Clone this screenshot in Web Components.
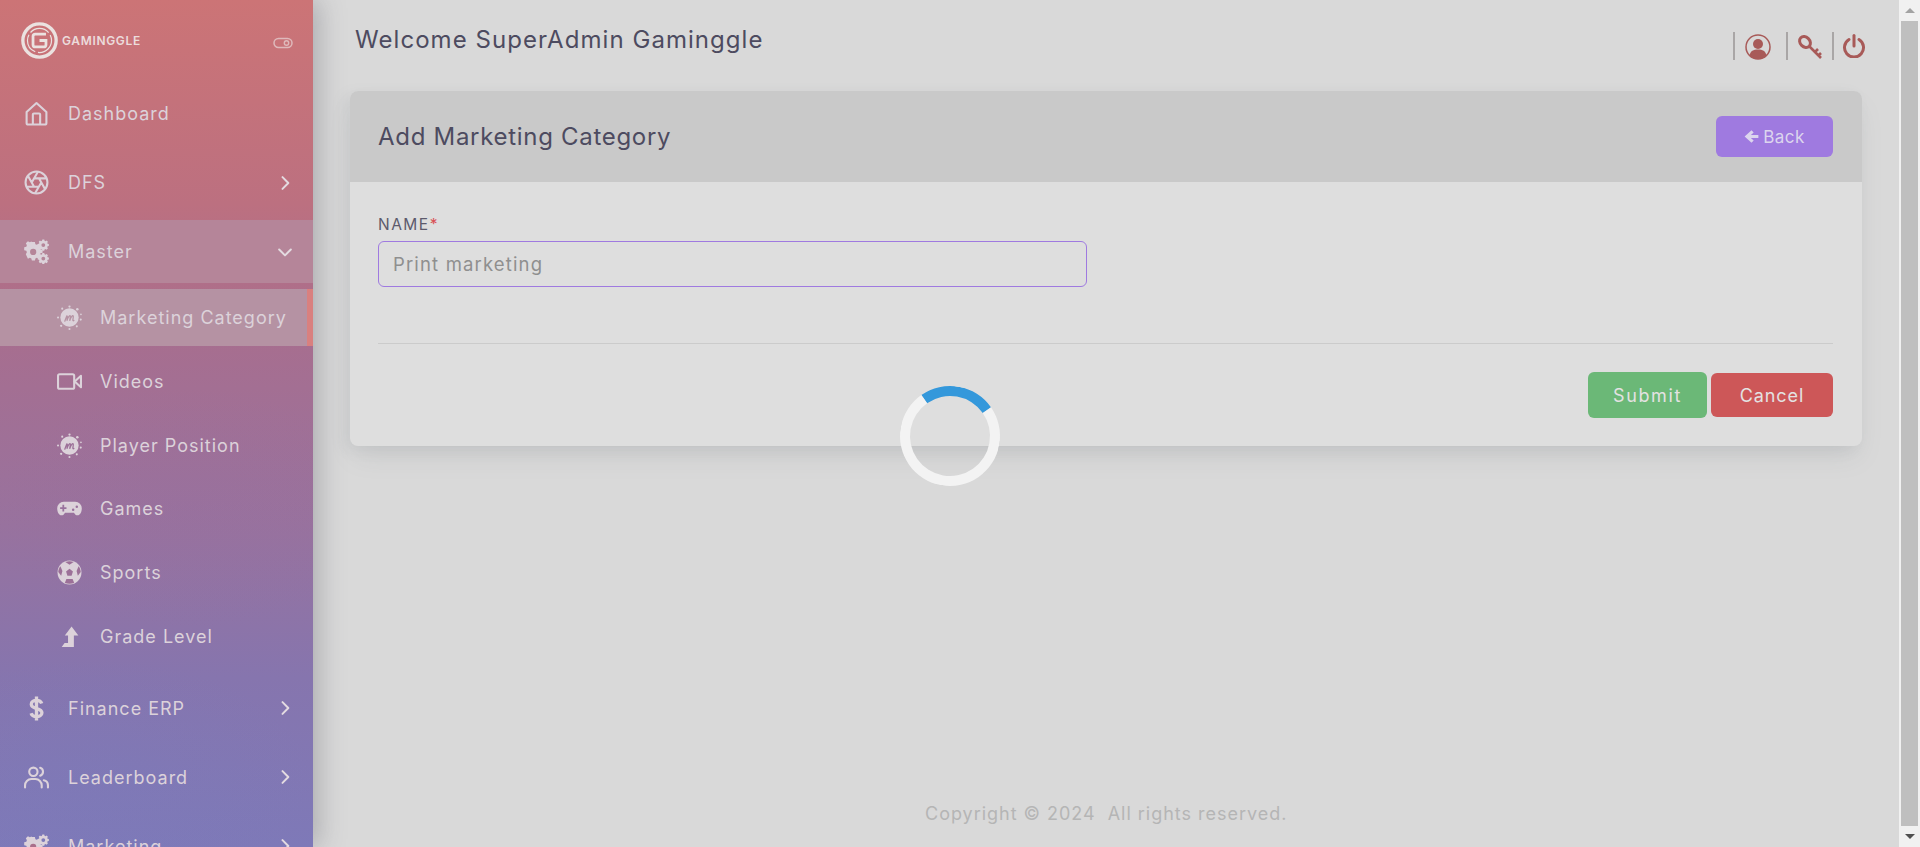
<!DOCTYPE html>
<html>
<head>
<meta charset="utf-8">
<title>Add Marketing Category</title>
<style>
    html, body { margin: 0; height: 100%; overflow: hidden; background: #d9d9d9; }
    body { font-family: "Inter", "Liberation Sans", sans-serif; }
</style>
</head>
<body>
<app-shell>
    <side-bar slot="side">
        <nav-item label="Dashboard" icon="home"></nav-item>
        <nav-item label="DFS" icon="aperture" arrow="right"></nav-item>
        <nav-item label="Master" icon="cogs" arrow="down" open></nav-item>
        <div slot="sub">
            <nav-item sub active label="Marketing Category" icon="badge"></nav-item>
            <nav-item sub label="Videos" icon="video"></nav-item>
            <nav-item sub label="Player Position" icon="badge"></nav-item>
            <nav-item sub label="Games" icon="gamepad"></nav-item>
            <nav-item sub label="Sports" icon="ball"></nav-item>
            <nav-item sub label="Grade Level" icon="levelup"></nav-item>
        </div>
        <nav-item slot="after" label="Finance ERP" icon="dollar" arrow="right"></nav-item>
        <nav-item slot="after" label="Leaderboard" icon="users" arrow="right"></nav-item>
        <nav-item slot="after" label="Marketing" icon="cogs" arrow="right"></nav-item>
    </side-bar>
    <top-bar slot="main"></top-bar>
    <form-card slot="main"></form-card>
    <page-footer slot="footer"></page-footer>
    <load-spinner slot="over"></load-spinner>
    <fake-scrollbar slot="scroll"></fake-scrollbar>
</app-shell>

<script>
const ICONS = {
    home: `<path d="M2.500 10.500 12 2l9.500 8.500V21a1.500 1.500 0 0 1-1.500 1.500H4A1.500 1.500 0 0 1 2.500 21z" fill="none" stroke="currentColor" stroke-width="2" stroke-linejoin="round"/><path d="M8.500 22.500V13a1 1 0 0 1 1-1h5a1 1 0 0 1 1 1v9.500" fill="none" stroke="currentColor" stroke-width="2"/>`,
    aperture: `<g fill="none" stroke="currentColor" stroke-width="2" stroke-linecap="round"><circle cx="12" cy="12" r="10.500"/><path d="M14.300 8 20 17.900M9.700 8h11.400M7.400 12l5.700-9.900M9.700 16 4 6.100M14.300 16H2.900M16.600 12l-5.700 9.900"/></g>`,
    cogs: `<g fill="currentColor"><path d="M8.200 5.400h3.200l.5 2.200 1.500.7 2-1.100 2.200 2.200-1.100 2 .7 1.600 2.200.5v3.100l-2.200.5-.7 1.600 1.100 2-2.200 2.200-2-1.100-1.500.6-.5 2.200H8.200l-.5-2.200-1.600-.6-2 1.100L1.900 18l1.100-2-.6-1.600-2.200-.5v-3.100l2.200-.5.6-1.600-1.100-2L4.100 4.500l2 1.100 1.600-.7z" transform="translate(0 -2) scale(.92)"/><path fill-rule="evenodd" d="M18.600 0h2l.3 1.300 1 .4 1.100-.7 1.400 1.400-.7 1.100.4 1 1.300.3v2l-1.300.3-.4 1 .7 1.100L23 10.600l-1.100-.7-1 .4-.3 1.300h-2l-.3-1.300-1-.4-1.100.7-1.400-1.400.7-1.100-.4-1-1.300-.3v-2l1.300-.3.4-1-.7-1.100L16.100 1l1.100.7 1-.4zM19.600 3.800a2 2 0 1 0 0 4 2 2 0 0 0 0-4z" transform="translate(.5 .5) scale(.92)"/><path fill-rule="evenodd" d="M18.600 13h2l.3 1.300 1 .4 1.100-.7 1.400 1.400-.7 1.100.4 1 1.300.3v2l-1.300.3-.4 1 .7 1.100-1.400 1.400-1.100-.7-1 .4-.3 1.300h-2l-.3-1.300-1-.4-1.100.7-1.400-1.400.7-1.100-.4-1-1.300-.3v-2l1.300-.3.4-1-.7-1.100 1.400-1.400 1.100.7 1-.4zM19.600 16.800a2 2 0 1 0 0 4 2 2 0 0 0 0-4z" transform="translate(.5 1.500) scale(.92)"/><circle cx="8.800" cy="12.400" r="3" fill="var(--cut, #b48)"/></g>`,
    badge: `<g fill="currentColor"><circle cx="12" cy="12" r="8.800"/><circle cx="12" cy="1.500" r="1.100"/><circle cx="5" cy="3.500" r="1"/><circle cx="19.500" cy="4" r="1.200"/><circle cx="23" cy="9" r=".8"/><circle cx="1" cy="12" r="1"/><circle cx="22.800" cy="14" r="1"/><circle cx="4" cy="20" r="1.100"/><circle cx="12" cy="23" r="1"/><circle cx="19" cy="20.500" r="1"/></g><path d="M7.500 15.500c.8-2 1.400-4 2-5 .6 0 .5 1.500 0 4.600 1-2.600 2-4.800 3-4.800.7 0 0 2.400-.3 4.800 1-2.600 2-4.800 3-4.800.9 0 .1 3 0 4.200 0 .7.4.9 1 .4" fill="none" stroke="var(--cut, #a57)" stroke-width="1.200" stroke-linecap="round"/>`,
    video: `<rect x="1" y="5" width="15.500" height="14" rx="1.500" fill="none" stroke="currentColor" stroke-width="2"/><path d="M23 6.500 17 12l6 5.500z" fill="none" stroke="currentColor" stroke-width="2" stroke-linejoin="round"/>`,
    gamepad: `<path fill="currentColor" fill-rule="evenodd" d="M6.500 5.500h11a6.300 6.300 0 0 1 6.300 6.500c0 3.500-1.700 6.500-4 6.500-1.700 0-2.600-1-3.500-2.500H7.700c-.9 1.500-1.800 2.500-3.500 2.500-2.300 0-4-3-4-6.500a6.300 6.300 0 0 1 6.300-6.500zM5.200 8.500v2.300H3v1.700h2.200v2.300h1.700v-2.300h2.200v-1.700H6.900V8.500zM15.500 12a1.200 1.200 0 1 0 0 2.400 1.200 1.200 0 0 0 0-2.400zm3.500-3a1.200 1.200 0 1 0 0 2.400 1.200 1.200 0 0 0 0-2.400z"/>`,
    ball: `<circle cx="12" cy="12" r="11.500" fill="currentColor"/><g fill="var(--cut, #957)"><path d="M12 8.500 15.300 11 14 15h-4l-1.300-4z"/><path d="M8 1.800 12 4.500l4-2.700C13.500 1 10.500 1 8 1.800z"/><path d="M1.200 11.500 4 15l1.200-4.500L3.300 6C2 7.500 1.300 9.500 1.200 11.500z"/><path d="M22.800 11.500 20 15l-1.200-4.500L20.700 6c1.300 1.500 2 3.500 2.100 5.500z"/><path d="M7.500 22l1.500-3.700h6l1.500 3.700c-3 1-6 1-9 0z"/></g>`,
    levelup: `<path fill="currentColor" d="M14 2.500 20.500 11h-4.300v11H4.500l2.800-3.800h3.300V11H7.500z"/>`,
    dollar: `<path d="M17 7.200C16.300 5 14.300 4.200 12 4.200c-2.700 0-5 1.300-5 3.800 0 5.300 10.200 2.800 10.200 8.100 0 2.500-2.500 3.700-5.200 3.700-2.400 0-4.500-1-5.200-3.200M12 .5v23" fill="none" stroke="currentColor" stroke-width="3.200"/>`,
    users: `<g fill="none" stroke="currentColor" stroke-width="2" stroke-linecap="round"><path d="M1 21.500v-2a6 6 0 0 1 6-6h4a6 6 0 0 1 6 6v2"/><circle cx="9" cy="6.500" r="4"/><path d="M23 21.500v-2a5 5 0 0 0-4-4.800M15.500 2.700a4 4 0 0 1 0 7.600"/></g>`,
    right: `<path d="m9 5 7 7-7 7" fill="none" stroke="currentColor" stroke-width="2.400" stroke-linecap="round" stroke-linejoin="round"/>`,
    down: `<path d="m5 9 7 7 7-7" fill="none" stroke="currentColor" stroke-width="2.400" stroke-linecap="round" stroke-linejoin="round"/>`
};

class AppShell extends HTMLElement {
    constructor() {
        super();
        this.attachShadow({mode: 'open'}).innerHTML = `
            <style>
                :host { display: flex; height: 847px; position: relative; overflow: hidden; }
                .page { flex: 1; display: flex; min-width: 0; }
                .content { flex: 1; min-width: 0; display: flex; flex-direction: column; padding: 0 37px; }
                .grow { flex: 1; }
            </style>
            <div class="page">
                <slot name="side"></slot>
                <div class="content">
                    <slot name="main"></slot>
                    <div class="grow"></div>
                    <slot name="footer"></slot>
                </div>
            </div>
            <slot name="scroll"></slot>
            <slot name="over"></slot>
        `;
    }
}

class SideBar extends HTMLElement {
    constructor() {
        super();
        this.attachShadow({mode: 'open'}).innerHTML = `
            <style>
                :host {
                    display: block; flex: 0 0 313px; width: 313px; height: 847px; overflow: hidden;
                    position: relative; z-index: 1;
                    background:
                        radial-gradient(200px 120px at 60% 60%, rgba(150,110,160,.22), transparent),
                        radial-gradient(220px 120px at 30% 92%, rgba(120,125,190,.25), transparent),
                        linear-gradient(180deg, #cc7476 0%, #bc7080 24%, #a76e8f 40%, #98729e 62%, #8675ae 80%, #7e79b8 100%);
                    box-shadow: 6px 0 24px rgba(90,90,100,.35);
                    color: #dcd2da;
                }
                .brand { height: 82px; box-sizing: border-box; display: flex; align-items: flex-start; padding: 22px 0 0 21px; }
                .brand svg.logo { width: 37px; height: 37px; flex: none; }
                .name { font: 600 12px "Inter", sans-serif; letter-spacing: .66px; margin: 12px 0 0 4px; color: #ecdcdc; line-height: 14px; }
                .toggle { margin: 14px 20px 0 auto; width: 20px; height: 14px; }
                .rows { display: flex; flex-direction: column; gap: 6px; }
                .after { display: flex; flex-direction: column; gap: 6px; margin-top: 12px; }
                ::slotted(div) { display: flex; flex-direction: column; gap: 6.750px; margin-top: 6px; }
            </style>
            <div class="brand">
                <svg class="logo" viewBox="0 0 40 40">
                    <circle cx="20" cy="20" r="18" fill="none" stroke="#ebe2e0" stroke-width="3.600"/>
                    <circle cx="20" cy="20" r="13" fill="none" stroke="#ebe2e0" stroke-width="1.300" stroke-dasharray="22 3"/>
                    <path d="M27 13H15.500a2.500 2.500 0 0 0-2.500 2.500v9a2.500 2.500 0 0 0 2.500 2.500h9a2.500 2.500 0 0 0 2.500-2.500V20h-7" fill="none" stroke="#ebe2e0" stroke-width="3"/>
                </svg>
                <span class="name">GAMINGGLE</span>
                <svg class="toggle" viewBox="0 0 20 14">
                    <rect x="1" y="2.500" width="18" height="9" rx="4.500" fill="none" stroke="#dfb9bb" stroke-width="1.500"/>
                    <circle cx="13.500" cy="7" r="2.200" fill="none" stroke="#dfb9bb" stroke-width="1.400"/>
                </svg>
            </div>
            <div class="rows"><slot></slot></div>
            <slot name="sub"></slot>
            <div class="after"><slot name="after"></slot></div>
        `;
    }
}

class NavItem extends HTMLElement {
    connectedCallback() {
        if (this.shadowRoot) return;
        const label = this.getAttribute('label');
        const icon = ICONS[this.getAttribute('icon')] || '';
        const arrow = this.getAttribute('arrow');
        this.attachShadow({mode: 'open'}).innerHTML = `
            <style>
                :host {
                    display: flex; align-items: center; height: 63px; box-sizing: border-box;
                    padding-left: 24px; font-size: 18px; letter-spacing: 1px; color: #dcd2da;
                    --cut: #a96f8b;
                }
                :host([open]) { background: #b58599; --cut: #b58599; }
                :host([sub]) { height: 57px; padding-left: 57px; --cut: #9c7098; }
                :host([active]) {
                    background: #b592a3; box-shadow: inset -6px 0 0 #d9807f; --cut: #b592a3;
                }
                svg.i { width: 25px; height: 25px; flex: none; color: #dcd2da; }
                .t { margin-left: 19px; flex: 1; white-space: nowrap; }
                :host([sub]) .t { margin-left: 18px; }
                svg.a { width: 20px; height: 20px; flex: none; margin-right: 18px; color: #e4dbe1; }
            </style>
            <svg class="i" viewBox="0 0 24 24">${icon}</svg>
            <span class="t">${label}</span>
            ${arrow ? `<svg class="a" viewBox="0 0 24 24">${ICONS[arrow]}</svg>` : ''}
        `;
    }
}

class TopBar extends HTMLElement {
    constructor() {
        super();
        this.attachShadow({mode: 'open'}).innerHTML = `
            <style>
                :host { display: flex; height: 91px; box-sizing: border-box; }
                h1 { margin: 24px 0 0 5px; font-size: 24px; line-height: 32px; font-weight: 400; color: #4d4b60; letter-spacing: 1.05px; white-space: nowrap; }
                .tools { margin-left: auto; display: flex; align-items: flex-start; padding-top: 32px; margin-right: -4px; color: #a85a58; }
                .sep { width: 2px; height: 28px; background: #a9a6a6; }
                svg { display: block; }
                .u { width: 26px; height: 26px; margin: 2px 15px 0 10px; }
                .k { width: 26px; height: 26px; margin: 2px 9px 0 9px; }
                .p { width: 24px; height: 24px; margin: 2px 0 0 8px; }
            </style>
            <h1>Welcome SuperAdmin Gaminggle</h1>
            <div class="tools">
                <div class="sep"></div>
                <svg class="u" viewBox="0 0 26 26">
                    <circle cx="13" cy="13" r="12" fill="none" stroke="currentColor" stroke-width="1.500"/>
                    <circle cx="13" cy="10" r="5" fill="currentColor"/>
                    <path d="M4.500 21.500c.8-4.500 4-6 8.500-6s7.700 1.500 8.500 6A12 12 0 0 1 13 25a12 12 0 0 1-8.500-3.500z" fill="currentColor"/>
                </svg>
                <div class="sep"></div>
                <svg class="k" viewBox="0 0 26 26">
                    <ellipse cx="8" cy="8" rx="6" ry="4.800" transform="rotate(45 8 8)" fill="none" stroke="currentColor" stroke-width="3"/>
                    <path d="M12 12 24 24M18 18l3-3M21.500 21.500l2.500-2.500" fill="none" stroke="currentColor" stroke-width="2.600"/>
                </svg>
                <div class="sep"></div>
                <svg class="p" viewBox="0 0 24 24">
                    <path d="M7 5.500a9.500 9.500 0 1 0 10 0" fill="none" stroke="currentColor" stroke-width="3" stroke-linecap="round"/>
                    <path d="M12 1.500V12" fill="none" stroke="currentColor" stroke-width="3" stroke-linecap="round"/>
                </svg>
            </div>
        `;
    }
}

class FormCard extends HTMLElement {
    constructor() {
        super();
        this.attachShadow({mode: 'open'}).innerHTML = `
            <style>
                :host {
                    display: block; height: 355px; background: #dedede; border-radius: 8px; overflow: hidden;
                    box-shadow: 0 14px 26px -6px rgba(120,125,135,.18), -6px 4px 14px rgba(120,125,135,.1);
                }
                .head {
                    height: 91px; background: #c9c9c9; display: flex; align-items: center; justify-content: space-between;
                    padding: 0 29px 0 28px;
                }
                h2 { margin: 0; font-size: 24px; font-weight: 400; color: #4d4b60; letter-spacing: .7px; white-space: nowrap; }
                .back {
                    width: 117px; height: 41px; border: 0; border-radius: 6px; background: #9f7ae0; color: #dcd5ee;
                    font: 400 17px "Inter", sans-serif; letter-spacing: .5px; display: flex; align-items: center; justify-content: center; gap: 4px;
                }
                .back svg { width: 15px; height: 15px; }
                .body { padding: 0 29px 0 28px; }
                label { display: block; margin-top: 33px; height: 26px; line-height: 20px; font-size: 15.500px; color: #5c5a6c; letter-spacing: 1.5px; }
                label b { color: #d94f54; font-weight: 400; }
                .field {
                    display: block; width: 100%; max-width: 709px; height: 46px; box-sizing: border-box; border: 1px solid #9f7ae0; border-radius: 6px;
                    padding-left: 14px; line-height: 44px; font-size: 18.500px; color: #8f8f8f; letter-spacing: 1.15px;
                }
                hr { border: 0; border-top: 1px solid #cbcbcb; margin: 56px 0 0; }
                .actions { display: flex; justify-content: flex-end; align-items: center; gap: 4px; margin-top: 28px; }
                button.s, button.c {
                    border: 0; border-radius: 6px; color: #e4e2e2; font: 400 18px "Inter", sans-serif; letter-spacing: .9px;
                }
                button.s { width: 119px; height: 46px; background: #6bb877; letter-spacing: 1.6px; }
                button.c { width: 122px; height: 44px; background: #cd5758; }
            </style>
            <div class="head">
                <h2>Add Marketing Category</h2>
                <button class="back">
                    <svg viewBox="0 0 24 24"><path d="M12 2 1 12l11 10 3.500-3.500-4.500-4H23v-5H11l4.500-4z" fill="currentColor"/></svg>
                    Back
                </button>
            </div>
            <div class="body">
                <label>NAME<b>*</b></label>
                <div class="field">Print marketing</div>
                <hr>
                <div class="actions">
                    <button class="s">Submit</button>
                    <button class="c">Cancel</button>
                </div>
            </div>
        `;
    }
}

class PageFooter extends HTMLElement {
    constructor() {
        super();
        this.attachShadow({mode: 'open'}).innerHTML = `
            <style>
                :host { display: block; height: 46px; font-size: 18px; letter-spacing: .98px; color: #b5b5b5; padding-left: 575px; line-height: 26px; }
                span { white-space: pre; }
            </style>
            <span>Copyright © 2024  All rights reserved.</span>
        `;
    }
}

class LoadSpinner extends HTMLElement {
    constructor() {
        super();
        this.attachShadow({mode: 'open'}).innerHTML = `
            <style>
                :host { position: absolute; left: 900px; top: 386px; width: 100px; height: 100px; z-index: 5; }
                div {
                    width: 100px; height: 100px; box-sizing: border-box; border-radius: 50%; border: 10px solid #f3f3f3;
                    border-top-color: #3498db; transform: rotate(10deg);
                }
            </style>
            <div></div>
        `;
    }
}

class FakeScrollbar extends HTMLElement {
    constructor() {
        super();
        this.attachShadow({mode: 'open'}).innerHTML = `
            <style>
                :host { display: flex; flex: 0 0 21px; flex-direction: column; align-items: center; background: #f1f1f1; position: relative; z-index: 2; }
                .top, .bot { height: 21px; width: 100%; display: flex; align-items: center; justify-content: center; flex: none; }
                .thumb { flex: 1; width: 17px; background: #bfbfbf; }
                i { display: block; width: 0; height: 0; border: 5px solid transparent; }
                .top i { border-bottom: 5px solid #a3a3a3; border-top: 0; }
                .bot i { border-top: 5px solid #505050; border-bottom: 0; }
            </style>
            <div class="top"><i></i></div>
            <div class="thumb"></div>
            <div class="bot"><i></i></div>
        `;
    }
}

customElements.define('nav-item', NavItem);
customElements.define('side-bar', SideBar);
customElements.define('top-bar', TopBar);
customElements.define('form-card', FormCard);
customElements.define('page-footer', PageFooter);
customElements.define('load-spinner', LoadSpinner);
customElements.define('fake-scrollbar', FakeScrollbar);
customElements.define('app-shell', AppShell);
</script>
</body>
</html>
